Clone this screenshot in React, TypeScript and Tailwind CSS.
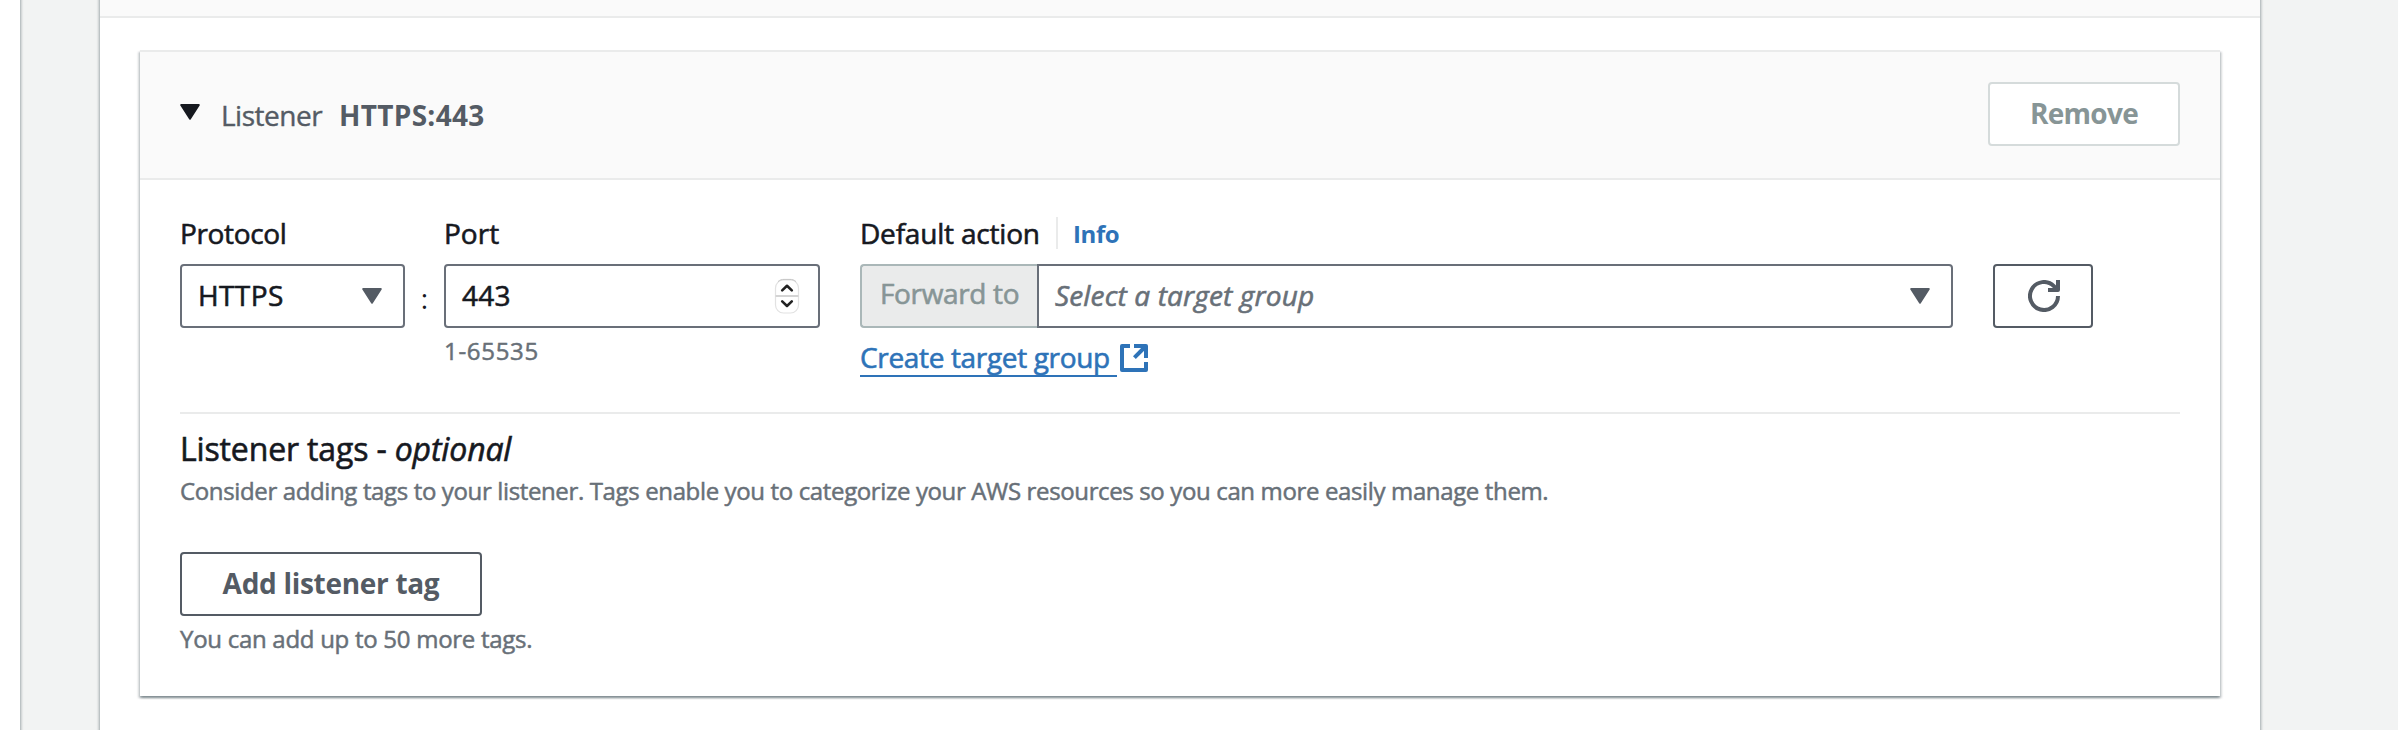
import type { ReactNode } from "react";

function Caret({ className }: { className: string }) {
  return (
    <svg className={`h-4 w-5 shrink-0 ${className}`} viewBox="0 0 20 16" fill="currentColor" stroke="currentColor" strokeWidth="2" strokeLinejoin="round">
      <path d="M1.2 1h17.6L10 14.6z" />
    </svg>
  );
}

function Label({ children }: { children: ReactNode }) {
  return (
    <div className="flex h-11 items-center text-[28px] leading-[44px] whitespace-nowrap text-[#16191f] [-webkit-text-stroke:0.6px]">
      {children}
    </div>
  );
}

function Stepper() {
  return (
    <svg className="h-[36px] w-[26px] shrink-0" viewBox="0 0 26 36" fill="none">
      <rect x="1.5" y="2" width="23" height="33" rx="8" fill="#fff" stroke="#e2e2e2" strokeWidth="1.2" />
      <path d="M4 3.6C6 1.8 8 1.4 10 1.4h6c2 0 4 .4 6 2.2" stroke="#c4c4c4" strokeWidth="1" />
      <path d="M1.5 18h23" stroke="#d4d4d4" strokeWidth="2" />
      <path d="M8.2 12.4 13 7.8l4.8 4.6M8.2 23.4l4.8 4.6 4.8-4.6" stroke="#222" strokeWidth="2.6" strokeLinecap="round" strokeLinejoin="round" />
    </svg>
  );
}

function ExternalIcon() {
  return (
    <svg className="mt-[7px] ml-[3px] size-7 shrink-0" viewBox="0 0 28 28" fill="none" stroke="#2e73b8" strokeWidth="4">
      <path d="M10 2H2v24h24v-8" strokeLinejoin="round" />
      <path d="M14 2h12v12" strokeLinejoin="round" />
      <path d="M25 3 14.4 13.6" />
    </svg>
  );
}

function RefreshIcon() {
  return (
    <svg className="ml-[2px] size-8" viewBox="0 0 32 32" fill="none" stroke="#545b64" strokeWidth="4">
      <path d="M30 16a14 14 0 1 1-4.1-9.9l3.6 3.9" />
      <path d="M30 0v10H20" strokeLinejoin="round" />
    </svg>
  );
}

const panelShadow =
  "shadow-[0_2px_2px_0_rgba(0,28,36,0.3),2px_2px_2px_0_rgba(0,28,36,0.15),-2px_2px_2px_0_rgba(0,28,36,0.15)]";

export default function App() {
  return (
    <div className="flex h-[730px] w-[2398px] overflow-hidden bg-[#f2f3f3] font-['Open_Sans',sans-serif]">
      <div className={`-mt-1 mr-[80px] w-5 shrink-0 bg-white ${panelShadow}`} />
      <main className={`-mt-1 flex w-[2160px] shrink-0 flex-col bg-white pt-1 ${panelShadow}`}>
        <div className="h-[18px] shrink-0 border-b-2 border-[#eaebeb] bg-[#fafafa]" />
        <section className={`mx-10 mt-8 flex h-[646px] shrink-0 flex-col border-t-2 border-[#eaebeb] bg-white ${panelShadow}`}>
          <header className="flex h-32 shrink-0 items-start border-b-2 border-[#eaebeb] bg-[#fafafa] px-10 pt-[30px]">
            <Caret className="mt-[22px] text-[#16191f]" />
            <h2 className="mt-[11px] ml-[21px] flex text-[28px] leading-[44px] whitespace-nowrap text-[#545b64]">
              <span className="w-[118px] tracking-[-0.5px] [-webkit-text-stroke:0.4px]">Listener</span>
              <span className="font-bold tracking-[0.3px]">HTTPS:443</span>
            </h2>
            <button className="ml-auto flex h-16 w-48 items-center justify-center rounded-[4px] border-2 border-[#d5dbdb] bg-white pb-[2px] text-[28px] font-bold tracking-[-0.7px] text-[#879596]">
              Remove
            </button>
          </header>

          <div className="flex flex-col px-10 pt-[31px]">
            <div className="flex h-[166px] items-start">
              <div className="w-[225px]">
                <Label>
                  <span className="tracking-[-0.35px]">Protocol</span>
                </Label>
                <div className="mt-[9px] flex h-16 items-center justify-between rounded-[4px] border-2 border-[#696f79] bg-white pr-[21px] pl-[16px]">
                  <span className="pb-[2px] text-[28px] tracking-[0.4px] text-[#16191f] [-webkit-text-stroke:0.6px]">HTTPS</span>
                  <Caret className="text-[#545b64]" />
                </div>
              </div>
              <div className="mt-[65px] w-[39px] text-center text-[28px] leading-[44px] text-[#16191f]">:</div>
              <div className="w-[376px]">
                <Label>Port</Label>
                <div className="mt-[9px] flex h-16 items-center justify-between rounded-[4px] border-2 border-[#696f79] bg-white pr-[18px] pl-[16px]">
                  <span className="pb-[2px] text-[28px] tracking-[0.3px] text-[#16191f] [-webkit-text-stroke:0.6px]">443</span>
                  <Stepper />
                </div>
                <p className="mt-[7px] text-[24px] leading-8 tracking-[0.7px] text-[#687078] [-webkit-text-stroke:0.5px]">1-65535</p>
              </div>
              <div className="ml-10 w-[1093px]">
                <Label>
                  <span className="tracking-[-0.2px]">Default action</span>
                  <span className="ml-auto h-8 w-[2px] self-center bg-[#eaebeb]" />
                  <a className="w-[895px] shrink-0 pt-[2px] pl-[15px] text-[24px] font-bold tracking-[-0.4px] text-[#2e73b8] [-webkit-text-stroke:0]">Info</a>
                </Label>
                <div className="mt-[9px] flex h-16">
                  <div className="flex w-[177px] shrink-0 items-center rounded-l-[4px] border-2 border-r-0 border-[#aab7b8] bg-[#eaebeb] pb-[6px] pl-[18px] text-[28px] tracking-[-0.35px] whitespace-nowrap text-[#879596] [-webkit-text-stroke:0.6px]">
                    Forward to
                  </div>
                  <div className="flex grow items-center justify-between rounded-r-[4px] border-2 border-[#696f79] bg-white pr-[21px] pl-[16px]">
                    <span className="pb-[2px] text-[28px] tracking-[0.15px] text-[#687078] italic [-webkit-text-stroke:0.6px]">Select a target group</span>
                    <Caret className="text-[#545b64]" />
                  </div>
                </div>
                <div className="mt-[9px] flex items-start">
                  <a className="h-10 w-[257px] border-b-2 border-[#2e73b8] text-[28px] leading-10 tracking-[-0.34px] whitespace-nowrap text-[#2e73b8] [-webkit-text-stroke:0.6px]">
                    Create target group
                  </a>
                  <ExternalIcon />
                </div>
              </div>
              <button className="mt-[53px] ml-10 flex h-16 w-[100px] items-center justify-center rounded-[4px] border-2 border-[#545b64] bg-white">
                <RefreshIcon />
              </button>
            </div>

            <hr className="mt-[35px] border-t-2 border-[#eaebeb]" />

            <h3 className="mt-[15px] text-[32px] leading-10 tracking-[-0.15px] whitespace-nowrap text-[#16191f] [-webkit-text-stroke:0.6px]">
              Listener tags - <i>optional</i>
            </h3>
            <p className="mt-[6px] text-[24px] leading-8 tracking-[-0.363px] whitespace-nowrap text-[#687078] [-webkit-text-stroke:0.5px]">
              Consider adding tags to your listener. Tags enable you to categorize your AWS resources so you can more easily manage them.
            </p>
            <button className="mt-[45px] flex h-16 w-[302px] items-center justify-center rounded-[4px] border-2 border-[#545b64] bg-white pb-[2px] text-[28px] font-bold tracking-[-0.3px] whitespace-nowrap text-[#545b64]">
              Add listener tag
            </button>
            <p className="mt-[7px] text-[24px] leading-8 tracking-[-0.28px] whitespace-nowrap text-[#687078] [-webkit-text-stroke:0.5px]">You can add up to 50 more tags.</p>
          </div>
        </section>
      </main>
    </div>
  );
}
